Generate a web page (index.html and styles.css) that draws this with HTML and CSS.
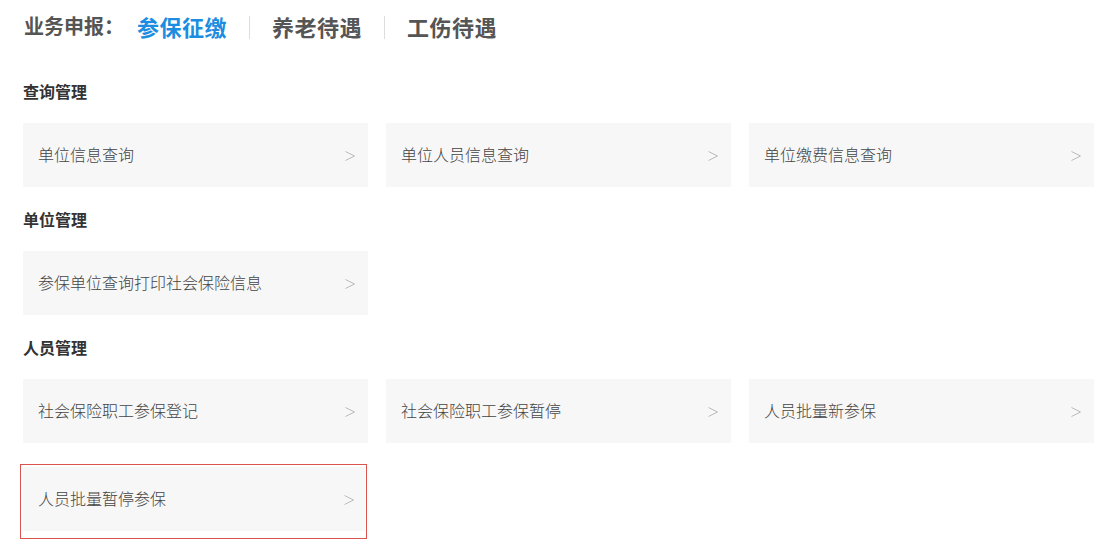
FILE: index.html
```html
<!DOCTYPE html>
<html lang="zh-CN">
<head>
<meta charset="utf-8">
<title>业务申报</title>
<link rel="stylesheet" href="styles.css">
</head>
<body>
<div class="page">
  <div class="tabs">
    <span class="tabs-label">业务申报：</span>
    <span class="tab tab-active">参保征缴</span>
    <span class="tab-sep"></span>
    <span class="tab">养老待遇</span>
    <span class="tab-sep"></span>
    <span class="tab">工伤待遇</span>
  </div>

  <div class="section section-first">
    <div class="section-title">查询管理</div>
    <div class="grid">
      <a class="card"><span>单位信息查询</span><svg class="arrow" viewBox="0 0 10 10"><polyline points="0.5,0.5 9.5,5 0.5,9.5"/></svg></a>
      <a class="card"><span>单位人员信息查询</span><svg class="arrow" viewBox="0 0 10 10"><polyline points="0.5,0.5 9.5,5 0.5,9.5"/></svg></a>
      <a class="card"><span>单位缴费信息查询</span><svg class="arrow" viewBox="0 0 10 10"><polyline points="0.5,0.5 9.5,5 0.5,9.5"/></svg></a>
    </div>
  </div>

  <div class="section">
    <div class="section-title">单位管理</div>
    <div class="grid">
      <a class="card"><span>参保单位查询打印社会保险信息</span><svg class="arrow" viewBox="0 0 10 10"><polyline points="0.5,0.5 9.5,5 0.5,9.5"/></svg></a>
    </div>
  </div>

  <div class="section">
    <div class="section-title">人员管理</div>
    <div class="grid">
      <a class="card"><span>社会保险职工参保登记</span><svg class="arrow" viewBox="0 0 10 10"><polyline points="0.5,0.5 9.5,5 0.5,9.5"/></svg></a>
      <a class="card"><span>社会保险职工参保暂停</span><svg class="arrow" viewBox="0 0 10 10"><polyline points="0.5,0.5 9.5,5 0.5,9.5"/></svg></a>
      <a class="card"><span>人员批量新参保</span><svg class="arrow" viewBox="0 0 10 10"><polyline points="0.5,0.5 9.5,5 0.5,9.5"/></svg></a>
      <div class="focus-ring">
        <a class="card card-focus"><span>人员批量暂停参保</span><svg class="arrow" viewBox="0 0 10 10"><polyline points="0.5,0.5 9.5,5 0.5,9.5"/></svg></a>
      </div>
    </div>
  </div>
</div>
</body>
</html>
```

FILE: styles.css
```css
html, body {
  margin: 0;
  padding: 0;
  background: #ffffff;
}

body {
  font-family: "Noto Sans CJK SC", "Liberation Sans", sans-serif;
  color: #555555;
}

.page {
  width: 1071px;
  padding-left: 23px;
}

.tabs {
  height: 56px;
  box-sizing: border-box;
  padding: 0 0 4px 1px;
  display: flex;
  align-items: center;
}

.tabs-label {
  font-size: 20px;
  font-weight: bold;
  color: #555555;
  margin-right: 13px;
  line-height: 1;
}

.tab {
  font-size: 22px;
  font-weight: bold;
  color: #555555;
  line-height: 1;
  letter-spacing: 0.5px;
}

.tab-active {
  color: #1c8de0;
}

.tab-sep {
  width: 1px;
  height: 23px;
  background: #dddddd;
  margin: 3px 22px 0 22px;
}

.section {
  margin-top: 22px;
}

.section-first {
  margin-top: 25px;
}

.section-title {
  font-size: 16px;
  font-weight: bold;
  color: #333333;
  line-height: 20px;
  height: 20px;
  margin-bottom: 22px;
}

.grid {
  display: grid;
  grid-template-columns: repeat(3, 345px);
  column-gap: 18px;
  row-gap: 24px;
}

.card {
  height: 64px;
  background: #f7f7f7;
  display: flex;
  align-items: center;
  justify-content: space-between;
  padding: 0 13px 2px 15px;
  box-sizing: border-box;
  font-size: 16px;
  font-weight: 300;
  color: #444444;
  text-decoration: none;
}

.card span {
  line-height: 1;
}

.arrow {
  width: 10px;
  height: 10px;
  margin-top: 4px;
  flex: none;
}

.arrow polyline {
  fill: none;
  stroke: #bbbbbb;
  stroke-width: 1;
}

.focus-ring {
  width: 347px;
  box-sizing: border-box;
  margin: -3px 0 0 -3px;
  border: 1px solid #d9534f;
  padding: 2px 1px 7px 2px;
}

.card-focus {
  width: 342px;
  padding-right: 11px;
}
```
